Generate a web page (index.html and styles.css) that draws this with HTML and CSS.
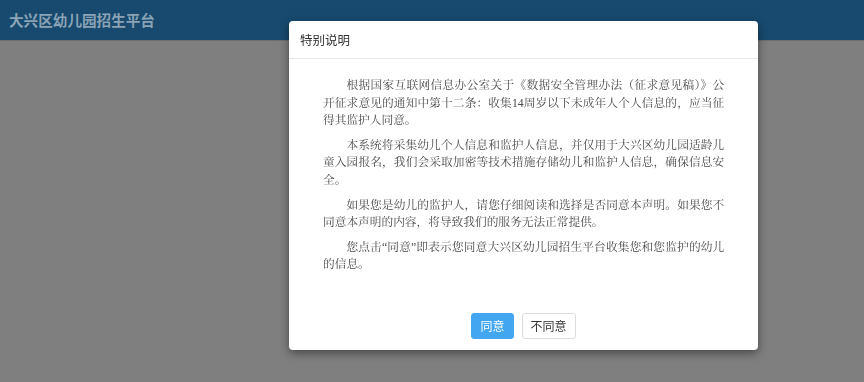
FILE: index.html
```html
<!DOCTYPE html>
<html lang="zh-CN">
<head>
<meta charset="utf-8">
<title>大兴区幼儿园招生平台</title>
<link rel="stylesheet" href="styles.css">
</head>
<body>
<header class="topbar">
  <h1 class="brand">大兴区幼儿园招生平台</h1>
</header>
<main class="page"></main>

<div class="modal" role="dialog">
  <div class="modal-header">
    <h2 class="modal-title">特别说明</h2>
  </div>
  <div class="modal-body">
    <p>根据国家互联网信息办公室关于《数据安全管理办法（征求意见稿）》公开征求意见的通知中第十二条：收集14周岁以下未成年人个人信息的，应当征得其监护人同意。</p>
    <p>本系统将采集幼儿个人信息和监护人信息，并仅用于大兴区幼儿园适龄儿童入园报名，我们会采取加密等技术措施存储幼儿和监护人信息，确保信息安全。</p>
    <p>如果您是幼儿的监护人，请您仔细阅读和选择是否同意本声明。如果您不同意本声明的内容，将导致我们的服务无法正常提供。</p>
    <p>您点击“同意”即表示您同意大兴区幼儿园招生平台收集您和您监护的幼儿的信息。</p>
  </div>
  <div class="modal-footer">
    <button class="btn btn-primary">同意</button>
    <button class="btn btn-default">不同意</button>
  </div>
</div>
</body>
</html>
```

FILE: styles.css
```css
html, body {
  margin: 0;
  padding: 0;
  height: 100%;
}
body {
  background: #7f7f7f;
  font-family: "Noto Sans CJK SC", "Noto Sans", sans-serif;
  overflow: hidden;
}
.topbar {
  height: 41px;
  background: #174a6e;
  border-bottom: 1px solid #6f6f6f;
  display: flex;
  align-items: center;
  padding-left: 9px;
  box-sizing: border-box;
}
.brand {
  margin: 0;
  font-size: 14.6px;
  font-weight: 700;
  color: #8aa3b6;
  letter-spacing: 0;
  line-height: 1;
}
.page {
  flex: 1;
}
.modal {
  position: fixed;
  left: 289px;
  top: 21px;
  width: 469px;
  height: 329px;
  background: #fff;
  border-radius: 4px;
  box-shadow: 0 3px 10px rgba(0, 0, 0, 0.45);
  display: flex;
  flex-direction: column;
}
.modal-header {
  height: 38px;
  box-sizing: border-box;
  border-bottom: 1px solid #e8e8e8;
  display: flex;
  align-items: center;
  padding-left: 11px;
}
.modal-title {
  margin: 0;
  font-size: 12.5px;
  font-weight: 400;
  color: #333;
}
.modal-body {
  flex: 1;
  padding: 18px 34px 0 34px;
}
.modal-body p {
  margin: 0 0 7px 0;
  width: 34.3em;
  font-family: "Liberation Serif", "Noto Serif CJK SC", "Noto Sans CJK SC", serif;
  font-size: 11.7px;
  line-height: 17.6px;
  color: #4a4a4a;
  text-indent: 2em;
  text-align: justify;
}
.modal-footer {
  display: flex;
  justify-content: center;
  gap: 8px;
  padding: 11px 0 11px 0;
}
.btn {
  height: 26px;
  padding: 0 8px;
  font-family: "Noto Sans CJK SC", sans-serif;
  font-size: 12px;
  line-height: 24px;
  border-radius: 3px;
  border: 1px solid #ddd;
  cursor: pointer;
}
.btn-primary {
  background: #42a6f0;
  border-color: #42a6f0;
  color: #fff;
}
.btn-default {
  background: #fff;
  color: #333;
}
```
